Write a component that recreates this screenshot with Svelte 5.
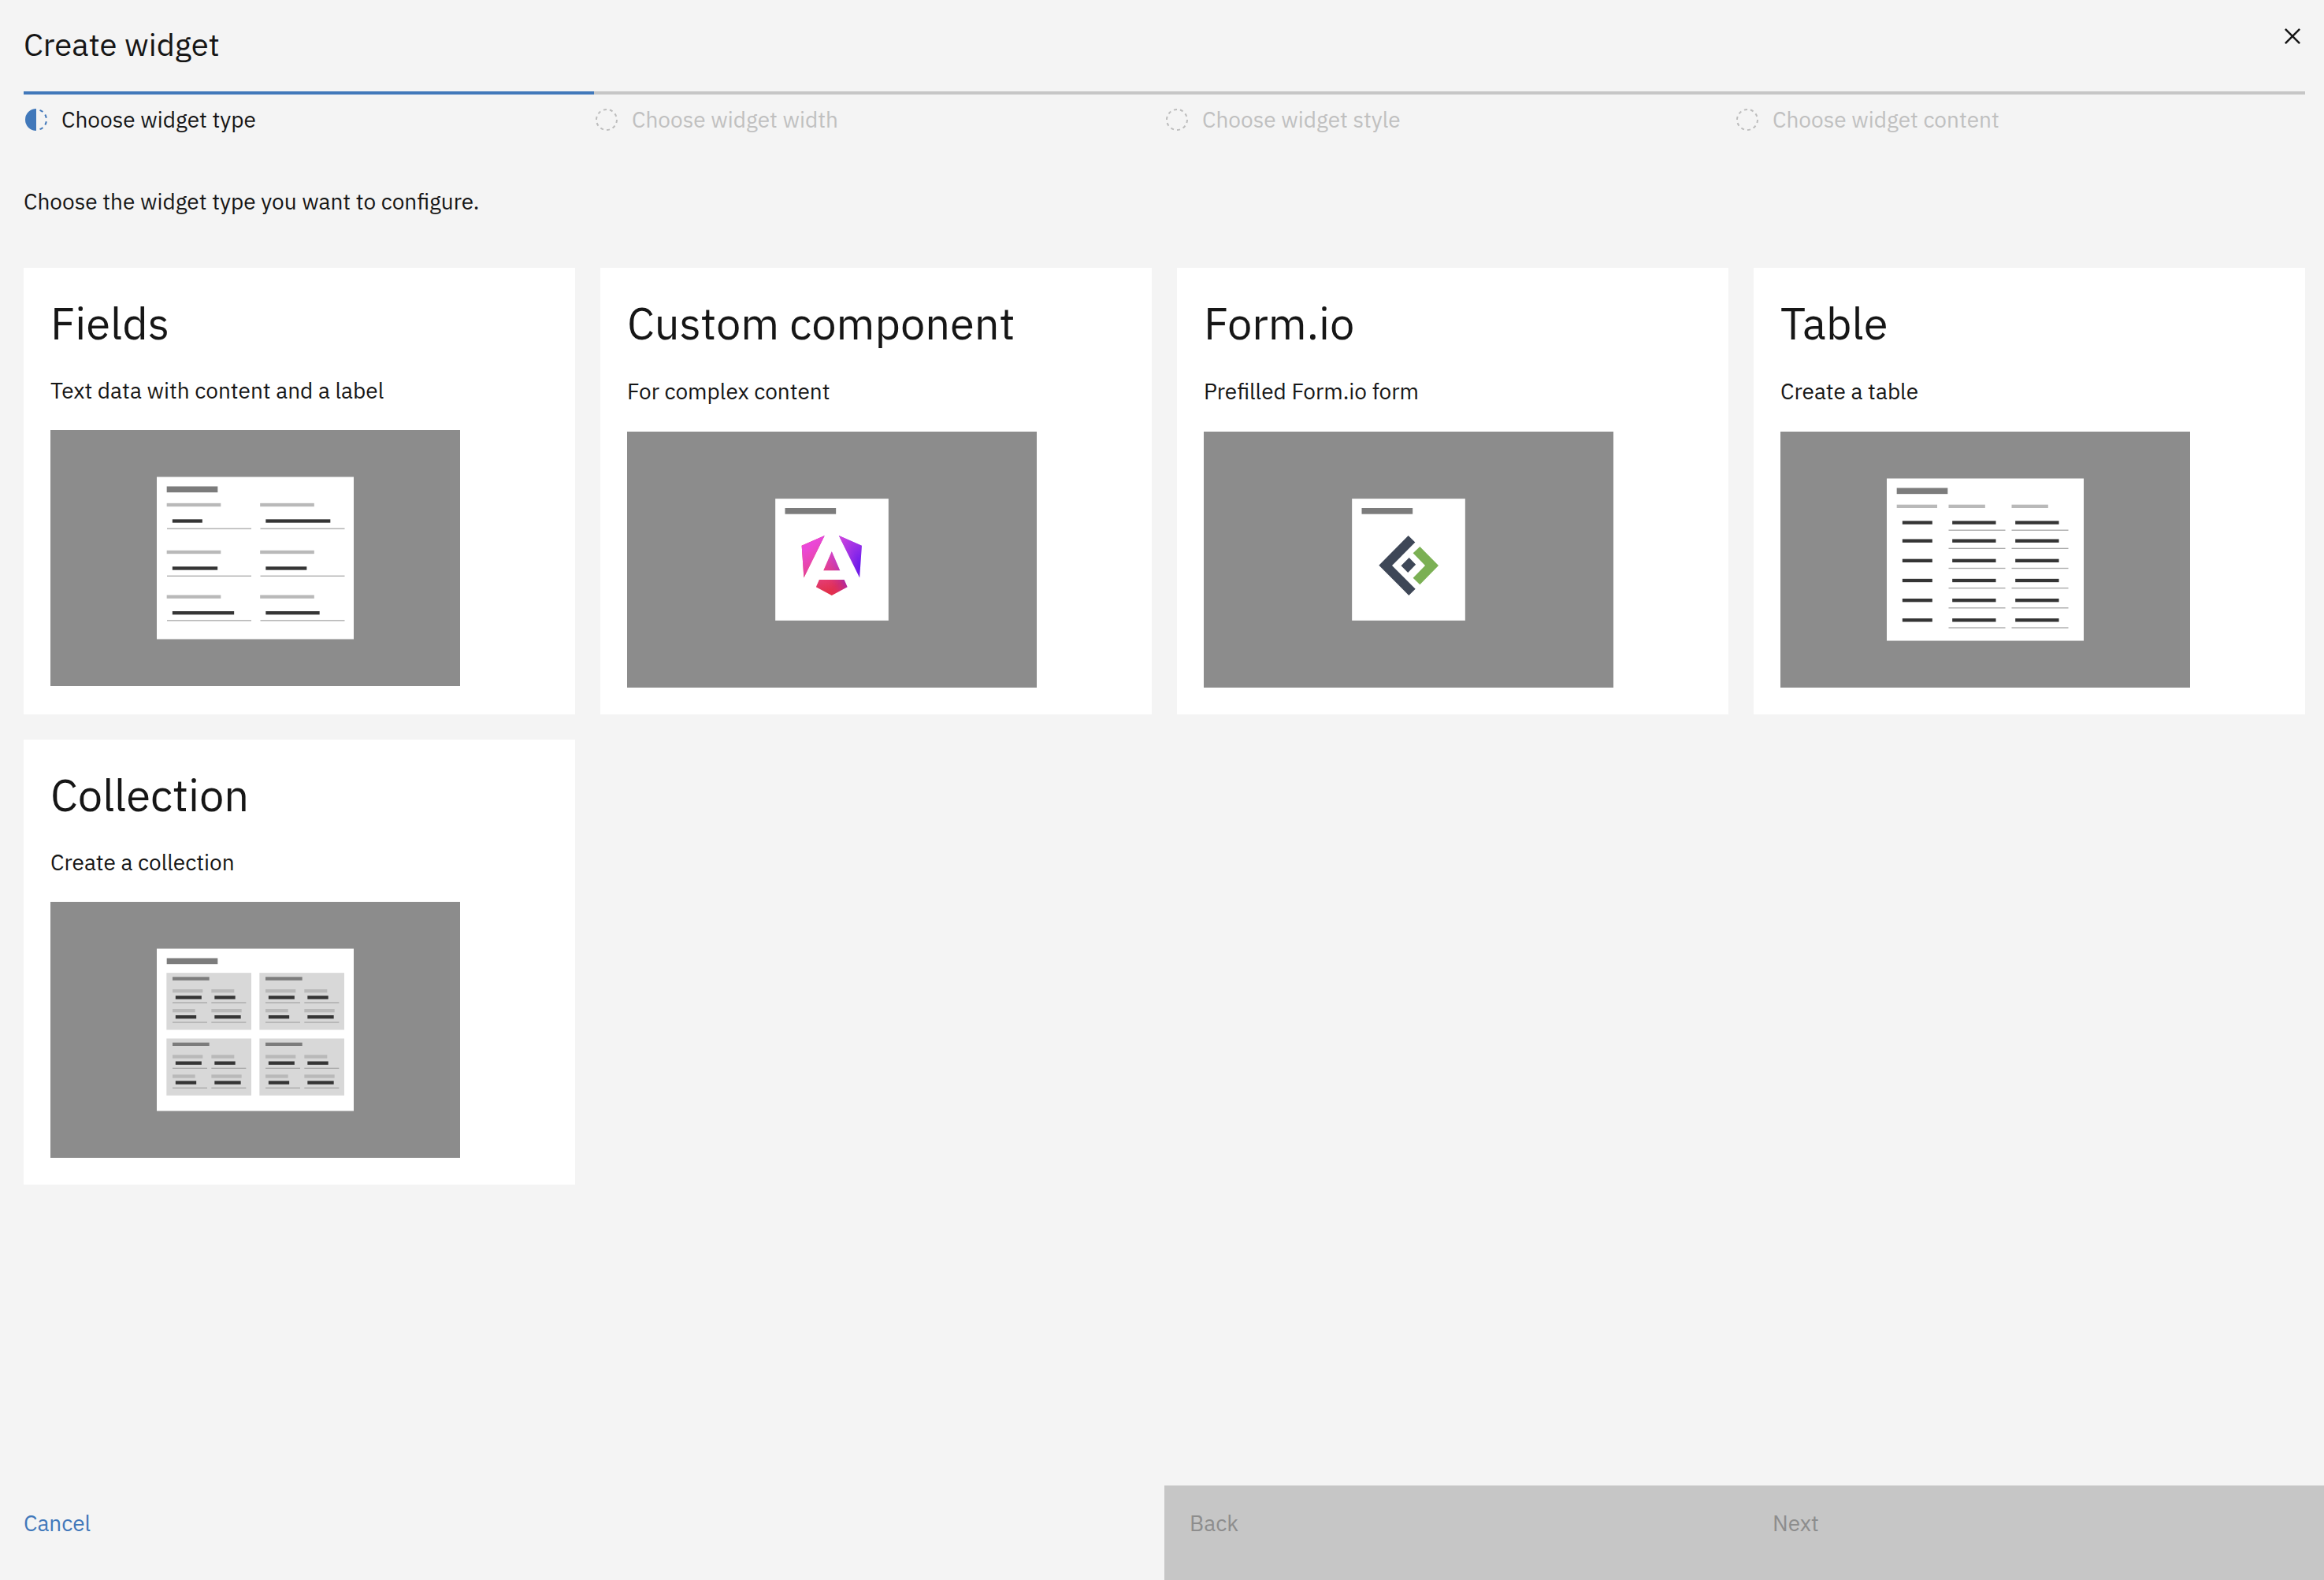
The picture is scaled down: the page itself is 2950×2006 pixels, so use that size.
<script>
  const steps = [
    { label: 'Choose widget type', current: true },
    { label: 'Choose widget width', current: false },
    { label: 'Choose widget style', current: false },
    { label: 'Choose widget content', current: false }
  ];

  const widgetTypes = [
    { kind: 'fields', title: 'Fields', description: 'Text data with content and a label', roomy: false },
    { kind: 'custom', title: 'Custom component', description: 'For complex content', roomy: true },
    { kind: 'formio', title: 'Form.io', description: 'Prefilled Form.io form', roomy: true },
    { kind: 'table', title: 'Table', description: 'Create a table', roomy: true },
    { kind: 'collection', title: 'Collection', description: 'Create a collection', roomy: false }
  ];

  // Thumbnail drawings use three units per pixel, relative to the white panel.
  const fieldRows = [
    { label: 100, value: 161.5, line: 195, widths: [114, 246] },
    { label: 280, value: 341.5, line: 375.5, widths: [172, 156] },
    { label: 450, value: 511.5, line: 545, widths: [235, 205] }
  ];
  const tableRows = [161.5, 231, 306.5, 382, 457.5, 533];
  const tiles = [[37, 92], [391, 92], [37, 342], [391, 342]];
</script>

<main class="wizard">
  <header class="top">
    <h1>Create widget</h1>
    <button class="close" type="button" aria-label="Close">
      <svg viewBox="0 0 32 32" aria-hidden="true">
        <path d="M17.414 16 24 9.414 22.586 8 16 14.586 9.414 8 8 9.414 14.586 16 8 22.586 9.414 24 16 17.414 22.586 24 24 22.586z" />
      </svg>
    </button>
  </header>

  <ol class="steps">
    {#each steps as step}
      <li class="step" class:current={step.current} aria-current={step.current ? 'step' : undefined}>
        <svg viewBox="0 0 32 32" aria-hidden="true">
          {#if step.current}
            <path d="M23.764 6.859l1.285-1.531A13.976 13.976 0 0020.867 2.887l-.683 1.878A11.973 11.973 0 0123.764 6.859zM27.81 14l1.968-.413A13.889 13.889 0 0028.14 9.046L26.409 10A12.52 12.52 0 0127.81 14zM20.184 27.235l.683 1.878a13.976 13.976 0 004.182-2.441l-1.285-1.531A11.973 11.973 0 0120.184 27.235zM26.409 22L28.14 23a14.14 14.14 0 001.638-4.587L27.81 18.066A12.152 12.152 0 0126.409 22zM16 30V2a14 14 0 000 28z" />
          {:else}
            <path d="M7.7 4.7a14.7 14.7 0 00-3 3.1L6.3 9A13.26 13.26 0 018.9 6.3zM4.6 12.3l-1.9-.6A12.51 12.51 0 002 16H4A11.48 11.48 0 014.6 12.3zM2.7 20.4a14.4 14.4 0 002 3.9l1.6-1.2a12.89 12.89 0 01-1.7-3.3zM7.8 27.3a14.4 14.4 0 003.9 2l.6-1.9A12.89 12.89 0 019 25.7zM11.7 2.7l.6 1.9A11.48 11.48 0 0116 4V2A12.51 12.51 0 0011.7 2.7zM24.2 27.3a15.18 15.18 0 003.1-3.1L25.7 23A11.53 11.53 0 0123 25.7zM27.4 19.7l1.9.6A15.47 15.47 0 0030 16H28A11.48 11.48 0 0127.4 19.7zM29.2 11.6a14.4 14.4 0 00-2-3.9L25.6 8.9a12.89 12.89 0 011.7 3.3zM24.1 4.6a14.4 14.4 0 00-3.9-2l-.6 1.9a12.89 12.89 0 013.3 1.7zM20.3 29.3l-.6-1.9A11.48 11.48 0 0116 28v2A21.42 21.42 0 0020.3 29.3z" />
          {/if}
        </svg>
        <span>{step.label}</span>
      </li>
    {/each}
  </ol>

  <p class="intro">Choose the widget type you want to configure.</p>

  <section class="cards" aria-label="Widget types">
    {#each widgetTypes as type}
      <button class="card" type="button">
        <span class="title">{type.title}</span>
        <span class="description" class:roomy={type.roomy}>{type.description}</span>
        <svg class="thumb" viewBox="0 0 1560 975" aria-hidden="true">
          <rect class="backdrop" width="1560" height="975" />
          {#if type.kind === 'custom' || type.kind === 'formio'}
            <g transform="translate(564.5 255.5)">
              <rect class="panel" width="431" height="464" />
              <rect class="heading" x="37" y="35.5" width="194" height="23" />
              {#if type.kind === 'custom'}
                <defs>
                  <linearGradient id="shield" x1="49" y1="213.75" x2="225.8" y2="129.7" gradientUnits="userSpaceOnUse">
                    <stop stop-color="#d92c40" />
                    <stop offset=".24" stop-color="#e3304c" />
                    <stop offset=".352" stop-color="#df2f58" />
                    <stop offset=".494" stop-color="#ca2c7c" />
                    <stop offset=".745" stop-color="#8a25e0" />
                    <stop offset="1" stop-color="#6114ee" />
                  </linearGradient>
                  <linearGradient id="glow" x1="41" y1="28.3" x2="156.7" y2="175.3" gradientUnits="userSpaceOnUse">
                    <stop stop-color="#eb47d8" />
                    <stop offset="1" stop-color="#ee62de" stop-opacity="0" />
                  </linearGradient>
                </defs>
                <g transform="translate(100.5 140.5) scale(1.03 .97)">
                  {#each ['url(#shield)', 'url(#glow)'] as paint}
                    <path fill={paint} d="m222.077 39.192-8.019 125.923L137.387 0l84.69 39.192Zm-53.105 162.825-57.933 33.056-57.934-33.056 11.783-28.556h92.301l11.783 28.556ZM111.039 62.675l30.357 73.803H80.681l30.358-73.803ZM7.937 165.115 0 39.192 84.69 0 7.937 165.115Z" />
                  {/each}
                </g>
              {:else}
                <path class="slate" d="M214.5 140.5l26 25.5-88 88.5 89 89-25 25-114-115zM217.5 224.5l25.500 26-30 31-26-26z" />
                <path class="leaf" d="M258.500 182.500l71 72-71 73-26-26 46-47-46-47z" />
              {/if}
            </g>
          {:else}
            <g transform="translate(405 178.500)">
              <rect class="panel" width="750" height="618" />
              <rect class="heading" x="38" y="36" width="194" height="23" />
              {#if type.kind === 'fields'}
                {#each fieldRows as row}
                  {#each row.widths as width, column}
                    <g transform="translate({column * 355.5} 0)">
                      <rect class="label" x="38" y={row.label} width="206" height="13" />
                      <rect class="value" x="59.5" y={row.value} {width} height="13" />
                      <rect class="line" x="39" y={row.line} width="321" height="4" />
                    </g>
                  {/each}
                {/each}
              {:else if type.kind === 'table'}
                <rect class="label" x="38" y="99.5" width="154" height="13" />
                {#each tableRows as y}
                  <rect class="value" x="59.5" {y} width="114" height="13" />
                {/each}
                {#each [235.5, 475.5] as x}
                  <rect class="label" {x} y="99.5" width="139" height="13" />
                  {#each tableRows as y}
                    <rect class="value" x={x + 14} {y} width="166" height="13" />
                    <rect class="line" {x} y={y + 33.5} width="216" height="4" />
                  {/each}
                {/each}
              {:else}
                {#each tiles as [x, y]}
                  <g transform="translate({x} {y})">
                    <rect class="tile" width="323" height="217" />
                    <rect class="heading" x="23" y="15.500" width="140" height="13" />
                    <rect class="label" x="23" y="62.5" width="115" height="13" />
                    <rect class="label" x="171" y="62.5" width="87" height="13" />
                    <rect class="value" x="34.5" y="87" width="99" height="13" />
                    <rect class="value" x="183" y="87" width="79" height="13" />
                    <rect class="line" x="23" y="111.5" width="132" height="4" />
                    <rect class="line" x="171" y="111.5" width="132" height="4" />
                    <rect class="label" x="23" y="137.5" width="86" height="13" />
                    <rect class="label" x="171" y="137.5" width="115" height="13" />
                    <rect class="value" x="34.5" y="161.5" width="79" height="13" />
                    <rect class="value" x="183" y="161.5" width="100" height="13" />
                    <rect class="line" x="23" y="186.5" width="132" height="4" />
                    <rect class="line" x="171" y="186.5" width="132" height="4" />
                  </g>
                {/each}
              {/if}
            </g>
          {/if}
        </svg>
      </button>
    {/each}
  </section>

  <footer class="actions">
    <button class="cancel" type="button">Cancel</button>
    <button type="button" disabled>Back</button>
    <button type="button" disabled>Next</button>
  </footer>
</main>

<style>
  :global(body) {
    background: #f4f4f4;
  }

  .wizard {
    box-sizing: border-box;
    display: flex;
    flex-direction: column;
    min-height: 100vh;
    background: #f4f4f4;
    color: #161616;
    font-family: 'IBM Plex Sans', 'Noto Sans', sans-serif;
    font-size: 28px;
    line-height: 36px;
  }

  button {
    margin: 0;
    border: 0;
    padding: 0;
    background: none;
    color: inherit;
    font: inherit;
    text-align: left;
  }

  .top {
    display: flex;
    justify-content: space-between;
    align-items: flex-start;
    padding: 26px 20px 34px 30px;
  }

  h1 {
    margin: 4px 0 0;
    font-size: 40px;
    font-weight: 400;
    line-height: 52px;
  }

  .close svg {
    display: block;
    width: 40px;
    height: 40px;
    fill: #161616;
  }

  .steps {
    display: grid;
    grid-template-columns: repeat(4, 1fr);
    margin: 0 24px 0 30px;
    padding: 0;
    list-style: none;
  }

  .step {
    display: flex;
    gap: 16px;
    padding-top: 14px;
    border-top: 4px solid #c6c6c6;
    color: #c0c0c0;
  }

  .step.current {
    border-color: #4178ba;
    color: #161616;
  }

  .step svg {
    width: 32px;
    height: 32px;
    margin-top: 2px;
    fill: #bdbdbd;
  }

  .step.current svg {
    fill: #4178ba;
  }

  .intro {
    margin: 68px 30px 66px;
  }

  .cards {
    display: grid;
    grid-template-columns: repeat(4, 1fr);
    gap: 32px;
    padding: 0 24px 48px 30px;
  }

  .card {
    display: flex;
    flex-direction: column;
    align-items: flex-start;
    padding: 34px;
    background: #fff;
  }

  .title {
    font-size: 56px;
    line-height: 72px;
  }

  .description {
    margin: 32px 0;
  }

  .description.roomy {
    line-height: 38px;
  }

  .thumb {
    display: block;
    width: 520px;
    max-width: 100%;
  }

  .backdrop { fill: #8c8c8c; }
  .panel { fill: #fff; }
  .heading { fill: #7c7c7c; }
  .label { fill: #b9b9b9; }
  .value { fill: #353535; }
  .line { fill: #a9a9a9; }
  .tile { fill: #d8d8d8; }
  .slate { fill: #3e4757; }
  .leaf { fill: #7bb054; }

  .actions {
    display: grid;
    grid-template-columns: 1478fr 740fr 732fr;
    margin-top: auto;
  }

  .actions button {
    padding: 30px 32px 54px;
    background: #c6c6c6;
    color: #8d8d8d;
  }

  .actions .cancel {
    padding-left: 30px;
    background: none;
    color: #4178ba;
  }
</style>
